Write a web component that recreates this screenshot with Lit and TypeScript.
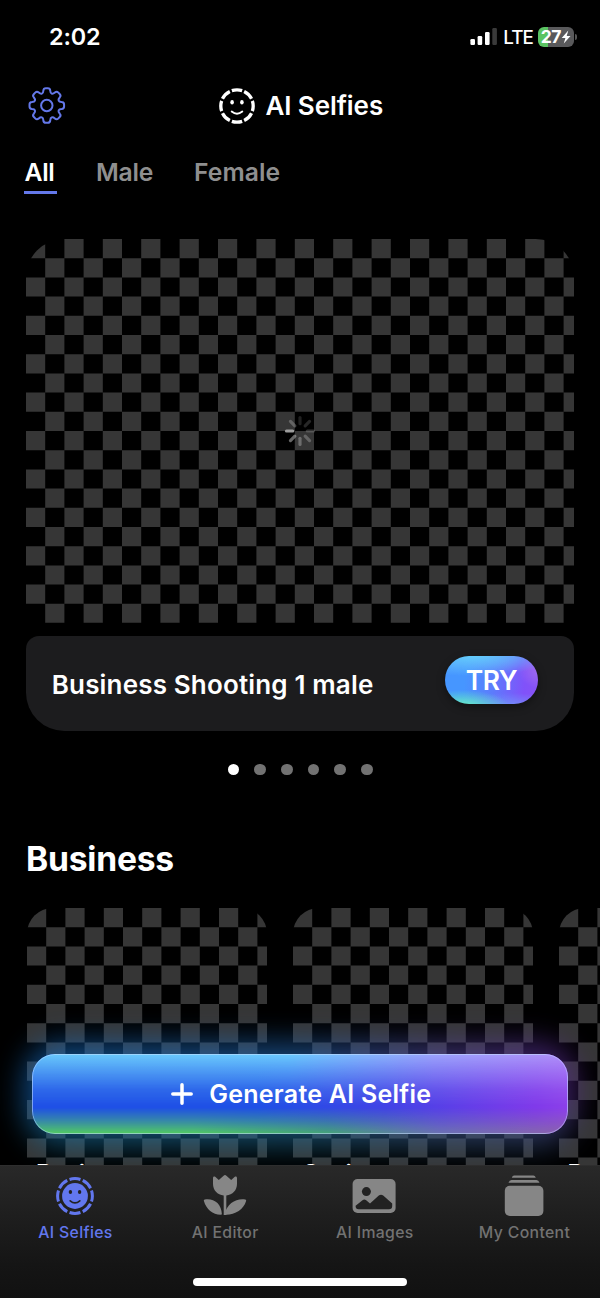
import { LitElement, html, svg, css } from "lit";
import { customElement, property } from "lit/decorators.js";

type Pt = [number, number];

/** Closed polygon path whose corners are softened with quadratic curves. */
function roundedPolygon(points: Pt[], radius: number): string {
  const n = points.length;
  const toward = (a: Pt, b: Pt): Pt => {
    const len = Math.hypot(b[0] - a[0], b[1] - a[1]);
    const k = Math.min(radius, len / 2) / len;
    return [a[0] + (b[0] - a[0]) * k, a[1] + (b[1] - a[1]) * k];
  };
  const f = (p: Pt) => `${p[0].toFixed(2)} ${p[1].toFixed(2)}`;
  return (
    points
      .map((p, i) => {
        const a = toward(p, points[(i + n - 1) % n]);
        const b = toward(p, points[(i + 1) % n]);
        return `${i ? "L" : "M"}${f(a)}Q${f(p)} ${f(b)}`;
      })
      .join("") + "Z"
  );
}

function gearPath(teeth: number, outer: number, root: number): string {
  const pts: Pt[] = [];
  for (let i = 0; i < teeth; i++) {
    const mid = (i * 2 * Math.PI) / teeth;
    for (const [r, d] of [[root, -0.28], [outer, -0.19], [outer, 0.19], [root, 0.28]]) {
      pts.push([r * Math.sin(mid + d), -r * Math.cos(mid + d)]);
    }
  }
  return roundedPolygon(pts, 2.4);
}

const CELL = 19.2;

/** Placeholder checkerboard; the board starts with a grey cell at its top left. */
function checker(width: number, height: number) {
  let d = "";
  for (let r = 0; r * CELL < height - 0.5; r++) {
    for (let c = r % 2; c * CELL < width; c += 2) {
      const w = Math.min(CELL, width - c * CELL);
      const h = Math.min(CELL, height - r * CELL);
      d += `M${(c * CELL).toFixed(1)} ${(r * CELL).toFixed(1)}h${w.toFixed(1)}v${h.toFixed(1)}h${(-w).toFixed(1)}z`;
    }
  }
  return html`<svg class="checker" width=${width} height=${height}><path d=${d} fill="#363636"/></svg>`;
}

const GEAR = gearPath(8, 17.6, 12.9);
const SPOKES = [0.2, 0.24, 0.3, 0.42, 0.5, 0.62, 0.95, 0.42];

const gearIcon = svg`<svg class="gear" width="40" height="40" viewBox="-19.8 -19.5 40 40">
  <path d=${GEAR} fill="none" stroke="currentColor" stroke-width="2" stroke-linejoin="round"/>
  <circle r="5.7" fill="none" stroke="currentColor" stroke-width="2"/>
</svg>`;

const smileOutline = svg`<svg width="38" height="38" viewBox="-19 -19 38 38">
  <circle r="16.2" fill="none" stroke="currentColor" stroke-width="3.3" pathLength="80" stroke-dasharray="8.3 1.7" stroke-dashoffset="4.15"/>
  <ellipse cx="-4.9" cy="-3.7" rx="1.8" ry="2.3" fill="currentColor"/>
  <ellipse cx="4.9" cy="-3.7" rx="1.8" ry="2.3" fill="currentColor"/>
  <path d="M-5.3 5.6Q0 9.9 5.3 5.6" fill="none" stroke="currentColor" stroke-width="1.9" stroke-linecap="round"/>
</svg>`;

const smileFilled = svg`<svg width="44" height="44" viewBox="-22 -22 44 44">
  <circle r="17.4" fill="none" stroke="currentColor" stroke-width="3" pathLength="80" stroke-dasharray="8.2 1.8" stroke-dashoffset="4.1"/>
  <circle r="12.9" fill="currentColor"/>
  <ellipse cx="-4.6" cy="-4" rx="1.7" ry="2.1" fill="#222"/>
  <ellipse cx="4.6" cy="-4" rx="1.7" ry="2.1" fill="#222"/>
  <path d="M-4.8 4.8Q0 9 4.8 4.8" fill="none" stroke="#222" stroke-width="1.7" stroke-linecap="round"/>
</svg>`;

const tulipIcon = svg`<svg width="44" height="44" viewBox="0 0 44 44" fill="currentColor">
  <path d="M10 4C10 2.4 11.2 2 12.2 2.8L15.8 6L20.6 1.7C21.5 .9 22.5 .9 23.4 1.7L28.2 6L31.8 2.8C32.8 2 34 2.4 34 4V9.8C34 16.4 29.6 20.8 23.3 21.5V41H20.7V21.5C14.4 20.8 10 16.4 10 9.8Z"/>
  <path d="M1.8 25.4C10.5 24 18.6 29 18.9 40.6C10.6 41.3 3.3 35.4 .9 26.9C.7 26 1 25.5 1.8 25.4Z"/>
  <path d="M42.2 25.4C33.5 24 24 29 21.4 40.6C31.4 41.3 40.7 35.4 43.1 26.9C43.3 26 43 25.5 42.2 25.4Z"/>
</svg>`;

const photoIcon = svg`<svg width="44" height="44" viewBox="0 0 44 44">
  <rect x=".6" y="5" width="43" height="34" rx="5" fill="currentColor"/>
  <circle cx="14.4" cy="17.6" r="4.5" fill="#222"/>
  <path d="M3.6 31.7L10.5 26.2Q12.3 24.8 14.2 26.2L18 29.4L26.8 21.6Q29 19.8 31.2 21.6L40.2 29.6V32Q40.2 35.2 37 35.2H6.6Q3.6 35.2 3.6 32Z" fill="#222"/>
</svg>`;

const stackIcon = svg`<svg width="44" height="44" viewBox="0 0 44 44" fill="currentColor">
  <path d="M12.1 1.6H31.3Q33 1.6 33.8 3.8H9.8Q10.4 1.6 12.1 1.6Z"/>
  <path d="M9.5 6H34.5Q36.6 6 37.5 8.8H6.5Q7.4 6 9.5 6Z"/>
  <rect x="2.8" y="11.7" width="38.6" height="30.2" rx="5"/>
</svg>`;

@customElement("status-bar")
class StatusBar extends LitElement {
  static styles = css`
    :host { display: flex; align-items: center; justify-content: space-between; height: 73px; padding: 0 23.5px 0 49px; box-sizing: border-box; }
    .time { font-size: 23.4px; font-weight: 600; letter-spacing: -0.15px; }
    .right { display: flex; align-items: center; }
    .net { font-size: 18.8px; font-weight: 500; letter-spacing: -0.9px; margin: 2px 5px 0 6.5px; }
    svg { display: block; }
    .battery { position: relative; width: 35.5px; height: 20px; border-radius: 6px; background: linear-gradient(90deg, #5bc463 0 28%, #59595b 28%); display: flex; align-items: center; justify-content: center; }
    .level { font-size: 17.5px; font-weight: 700; letter-spacing: -0.7px; line-height: 20px; }
    .nub { width: 2px; height: 6px; margin-left: 1px; border-radius: 0 2px 2px 0; background: #555; }
  `;
  render() {
    return html`
      <span class="time">2:02</span>
      <div class="right">
        <svg width="28" height="18" viewBox="0 0 28 18" fill="#fff">
          <rect x="1.4" y="11" width="4.6" height="6" rx="1.2"/>
          <rect x="8.6" y="8" width="4.6" height="9" rx="1.2"/>
          <rect x="16" y="4" width="4.6" height="13" rx="1.2"/>
          <rect x="23.3" y="0" width="4.6" height="17" rx="1.2" fill="#3a3a3a"/>
        </svg>
        <span class="net">LTE</span>
        <div class="battery">
          <span class="level">27</span>
          <svg width="10" height="14" viewBox="0 0 10 14"><path d="M7.3.6L.7 7.9H4.4L2.8 13.4L9.5 5.9H5.7Z" fill="#fff"/></svg>
        </div>
        <span class="nub"></span>
      </div>
    `;
  }
}

@customElement("category-tabs")
class CategoryTabs extends LitElement {
  static styles = css`
    :host { display: flex; height: 44px; margin-top: 12px; padding-left: 24px; font-size: 24.7px; font-weight: 600; line-height: 45px; color: #8f8f8f; letter-spacing: 0.05px; }
    .tab { box-sizing: border-box; height: 44px; margin-right: 39.5px; white-space: nowrap; }
    .all { width: 32.5px; color: #fff; border-bottom: 3px solid #6478ea; padding-left: 0.5px; letter-spacing: -0.3px; }
    .male { width: 58.5px; letter-spacing: -0.2px; }
  `;
  render() {
    return html`
      <div class="tab all">All</div>
      <div class="tab male">Male</div>
      <div class="tab">Female</div>
    `;
  }
}

@customElement("hero-slide")
class HeroSlide extends LitElement {
  static styles = css`
    :host { display: block; margin: 45px 25.6px 0 25.8px; }
    .preview { height: 383.8px; display: grid; place-items: center; border-radius: 38.4px 38.4px 0 0; overflow: hidden; }
    .preview > svg { grid-area: 1 / 1; display: block; }
    .caption { box-sizing: border-box; height: 95.5px; margin-top: 13px; padding: 0 36.5px 0 26px; display: flex; align-items: center; justify-content: space-between; border-radius: 13px 13px 38.4px 38.4px; background: #1c1c1e; }
    .name { padding-top: 1px; font-size: 26px; font-weight: 600; letter-spacing: 0.16px; white-space: nowrap; }
    .try { width: 93px; height: 48.5px; margin-bottom: 7px; border-radius: 25px; display: grid; place-items: center; font-size: 26.4px; font-weight: 600; letter-spacing: -0.4px; line-height: 48px; box-shadow: 0 3px 9px rgba(0, 0, 0, 0.4);
      background:
        radial-gradient(ellipse 48px 17px at 18% 106%, #69f5c0 0, rgba(95, 225, 205, 0.7) 45%, transparent 100%),
        radial-gradient(ellipse 84px 22px at 30% -4%, #66d2fb 0, rgba(100, 195, 252, 0.65) 50%, transparent 100%),
        radial-gradient(ellipse 22px 19px at 102% 28%, #a06cee, transparent),
        radial-gradient(ellipse 60px 14px at 68% 106%, rgba(115, 150, 250, 0.9), transparent),
        linear-gradient(95deg, #4696ff 22%, #5c7cfc 52%, #8052fa 84%, #8852f5 100%); }
    .dots { display: flex; justify-content: center; gap: 15.2px; margin-top: 32.4px; }
    .dot { width: 11.5px; height: 11.5px; border-radius: 50%; background: #727272; }
    .current { background: #fff; }
  `;
  render() {
    return html`
      <div class="preview">
        ${checker(548.8, 383.8)}
        <svg width="32" height="32" viewBox="-16 -16 32 32">
          ${SPOKES.map((o, i) => svg`<line y1="-7.3" y2="-13.5" stroke="#a4a4a4" stroke-opacity=${o} stroke-width="3.2" stroke-linecap="round" transform="rotate(${i * 45})"/>`)}
        </svg>
      </div>
      <div class="caption">
        <span class="name">Business Shooting 1 male</span>
        <span class="try">TRY</span>
      </div>
      <div class="dots">
        ${[0, 1, 2, 3, 4, 5].map((i) => html`<span class="dot ${i === 0 ? "current" : ""}"></span>`)}
      </div>
    `;
  }
}

@customElement("style-row")
class StyleRow extends LitElement {
  @property() heading = "";
  @property({ attribute: false }) items: string[] = [];
  static styles = css`
    :host { display: block; margin-top: 61.5px; }
    .heading { margin: 0; padding-left: 26px; height: 44px; line-height: 44px; font-size: 33.6px; font-weight: 700; letter-spacing: -0.2px; }
    .cards { display: flex; gap: 25.8px; margin-top: 27.3px; padding-left: 27px; }
    .card { flex: 0 0 240px; height: 326.4px; display: grid; border-radius: 25.6px; overflow: hidden; }
    .card > * { grid-area: 1 / 1; }
    .checker { display: block; }
    .name { padding: 251.4px 9px 0; font-size: 24px; line-height: 29px; font-weight: 600; letter-spacing: -0.3px; white-space: nowrap; z-index: 1; }
  `;
  render() {
    return html`
      <h2 class="heading">${this.heading}</h2>
      <div class="cards">
        ${this.items.map((t) => html`<div class="card">${checker(240, 326.4)}<div class="name">${t}</div></div>`)}
      </div>
    `;
  }
}

@customElement("generate-button")
class GenerateButton extends LitElement {
  static styles = css`
    :host { display: block; position: relative; height: 80px; }
    .glow { position: absolute; inset: -11px -7px; border-radius: 36px; filter: blur(15px); opacity: 0.66;
      background:
        linear-gradient(0deg, rgba(30, 130, 130, 0.6), transparent 45%),
        linear-gradient(90deg, #1670c8 0, #2468b4 50%, #5548a0 76%, #5e2a98 100%); }
    .face { position: relative; box-sizing: border-box; height: 80px; border-radius: 23px; overflow: hidden; display: flex; align-items: center; justify-content: center; gap: 16.5px; padding-left: 2px;
      background: linear-gradient(90deg, #1f50e6 0 42%, #4143e6 66%, #803aea 94%, #8c40ea 100%); }
    .top, .bottom, .rim { position: absolute; inset: 0; }
    .top { background: linear-gradient(90deg, #66c4fa 0, #69c6fd 48%, #9aa0fb 75%, #ae8cf8 100%); -webkit-mask-image: linear-gradient(180deg, #000 2%, rgba(0, 0, 0, 0.62) 22%, rgba(0, 0, 0, 0.22) 44%, transparent 65%); mask-image: linear-gradient(180deg, #000 2%, rgba(0, 0, 0, 0.62) 22%, rgba(0, 0, 0, 0.22) 44%, transparent 65%); }
    .bottom { background: linear-gradient(90deg, #4fc468 0 30%, #449f7c 55%, #6a6fb4 76%, #8c60b0 100%); -webkit-mask-image: linear-gradient(0deg, #000 2%, rgba(0, 0, 0, 0.5) 16%, transparent 33%); mask-image: linear-gradient(0deg, #000 2%, rgba(0, 0, 0, 0.5) 16%, transparent 33%); }
    .rim { box-sizing: border-box; border-radius: 23px; border: 1.5px solid rgba(200, 225, 255, 0.55); }
    .plus, .label { position: relative; }
    .label { font-size: 25px; font-weight: 600; letter-spacing: 0.25px; white-space: nowrap; }
  `;
  render() {
    return html`
      <div class="glow"></div>
      <div class="face">
        <div class="top"></div>
        <div class="bottom"></div>
        <div class="rim"></div>
        <svg class="plus" width="22" height="22" viewBox="0 0 22 22"><path d="M11 1.8V20.2M1.8 11H20.2" stroke="#fff" stroke-width="3.5" stroke-linecap="round"/></svg>
        <span class="label">Generate AI Selfie</span>
      </div>
    `;
  }
}

@customElement("bottom-nav")
class BottomNav extends LitElement {
  static styles = css`
    :host { display: flex; flex-direction: column; align-items: center; height: 133px; background: linear-gradient(180deg, #292929 0, #1f1f1f 35%, #151515 75%, #111 100%); box-shadow: inset 0 1px #2e2e2e; }
    .items { display: grid; grid-template-columns: repeat(4, 149.7px); height: 113px; }
    .item { display: flex; flex-direction: column; align-items: center; padding-top: 9px; color: #868686; }
    .item.active { color: #6277ee; }
    .item svg { display: block; margin-right: 1px; }
    .label { margin-top: 5px; font-size: 15.8px; line-height: 20px; font-weight: 500; letter-spacing: 0.35px; color: #727272; white-space: nowrap; }
    .active .label { color: #6277ee; }
    .home { width: 214.5px; height: 8px; border-radius: 4px; background: #fff; }
  `;
  render() {
    const items = [
      { label: "AI Selfies", icon: smileFilled, active: true },
      { label: "AI Editor", icon: tulipIcon },
      { label: "AI Images", icon: photoIcon },
      { label: "My Content", icon: stackIcon },
    ];
    return html`
      <nav class="items">
        ${items.map((i) => html`<div class="item ${i.active ? "active" : ""}">${i.icon}<span class="label">${i.label}</span></div>`)}
      </nav>
      <div class="home"></div>
    `;
  }
}

@customElement("app-root")
class AppRoot extends LitElement {
  static styles = css`
    :host { display: flex; flex-direction: column; position: relative; width: 600px; height: 1298px; overflow: hidden; background: #000; color: #fff; font-family: Inter, "Liberation Sans", sans-serif; }
    .header { display: grid; grid-template-columns: 1fr auto 1fr; align-items: center; height: 65px; padding: 0 27px; }
    .gear { display: block; color: #6478ea; }
    .title { display: flex; align-items: center; gap: 9px; padding-left: 1.5px; font-size: 26px; font-weight: 600; letter-spacing: -0.08px; white-space: nowrap; }
    .title svg { display: block; }
    .content { flex: 1; min-height: 0; overflow: hidden; }
    .cta { position: absolute; left: 32px; right: 32px; top: 1054px; }
    .nav { position: relative; flex: none; }
  `;
  render() {
    return html`
      <status-bar></status-bar>
      <header class="header">
        ${gearIcon}
        <div class="title">${smileOutline}<span>AI Selfies</span></div>
      </header>
      <category-tabs></category-tabs>
      <main class="content">
        <hero-slide></hero-slide>
        <style-row heading="Business" .items=${["Business", "Casino", "Business"]}></style-row>
      </main>
      <generate-button class="cta"></generate-button>
      <bottom-nav class="nav"></bottom-nav>
    `;
  }
}
